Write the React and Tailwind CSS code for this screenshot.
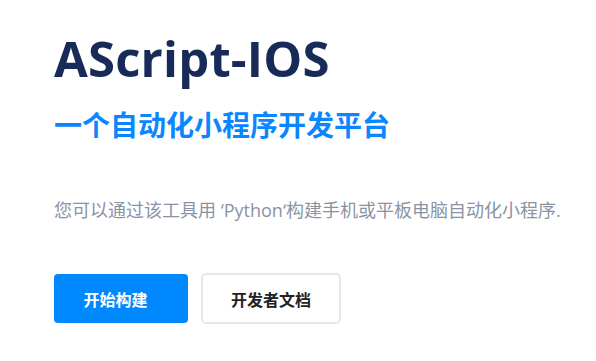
export default function App() {
  return (
    <div className="w-[596px] h-[361px] bg-white overflow-hidden font-['Open_Sans','Noto_Sans_CJK_SC',sans-serif]">
      <div className="pl-[54px] pt-[28px] flex flex-col">
        <h1 className="text-[49px] leading-[60px] font-bold text-[#172a58] tracking-[0.2px]">AScript-IOS</h1>
        <h2 className="mt-[18px] text-[28px] leading-[36px] font-bold text-[#0a86ff] font-['Noto_Sans_CJK_SC',sans-serif]">一个自动化小程序开发平台</h2>
        <p className="mt-[54px] text-[18px] leading-[28px] text-[#8a93a3]">您可以通过该工具用 ‘Python‘构建手机或平板电脑自动化小程序.</p>
        <div className="mt-[50px] flex gap-[13px] font-['Noto_Sans_CJK_SC',sans-serif]">
          <button className="w-[134px] h-[49px] pr-[11px] rounded-[4px] bg-[#0088ff] text-white text-[16px] font-bold">开始构建</button>
          <button className="w-[140px] h-[51px] -mt-[1px] rounded-[5px] border-2 border-[#e3e8f0] bg-white text-[#222] text-[16px] font-bold">开发者文档</button>
        </div>
      </div>
    </div>
  );
}
